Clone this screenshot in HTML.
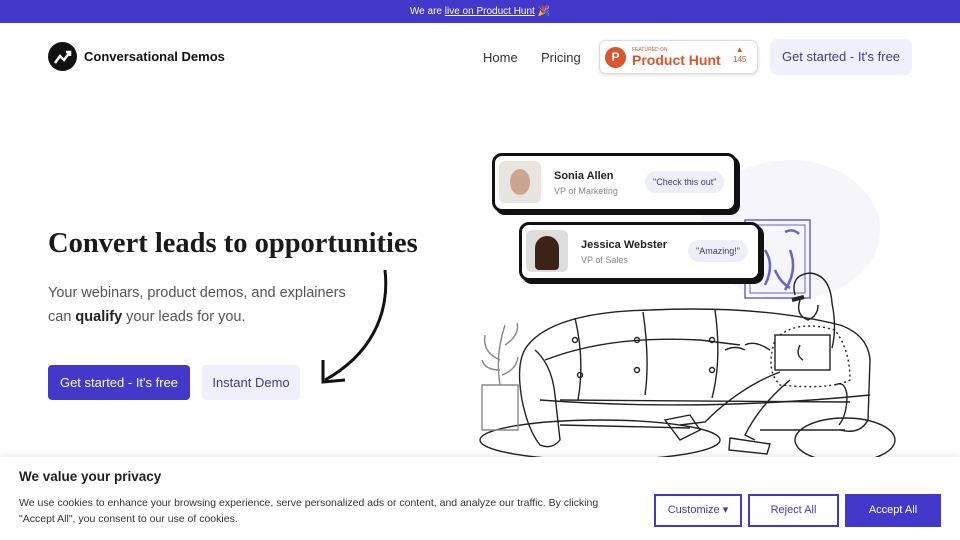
<!DOCTYPE html>
<html><head><meta charset="utf-8"><style>
*{box-sizing:border-box;margin:0;padding:0}
body{width:960px;height:540px;overflow:hidden;background:#fff;font-family:"Liberation Sans",sans-serif;position:relative;color:#111}
.banner{height:23px;background:#4338ca;color:#fff;font-size:10px;text-align:center;line-height:23px}
.abs{position:absolute}
.card{position:absolute;background:#fff;border:3px solid #111;border-radius:10px;box-shadow:3px 3px 0 #111}
.av{position:absolute;width:42px;height:42px;border-radius:6px;background:#e8e4e0;overflow:hidden}
.nm{position:absolute;font-size:11px;font-weight:bold;color:#222}
.rl{position:absolute;font-size:9px;color:#888}
.pill{position:absolute;background:#eeeef8;border-radius:12px;font-size:9px;color:#3f3f7a;padding:6px 8px}
.btn{position:absolute;font-size:12px;text-align:center}
</style></head><body>
<div class="banner">We are <u>live on Product Hunt</u> 🎉</div>
<div class="abs" style="left:48px;top:42px;width:29px;height:29px;border-radius:50%;background:#111"></div>
<svg class="abs" style="left:48px;top:42px" width="29" height="29"><path d="M7 21 L12 14 L16 18 L22 10 M18 10 H22 V14" stroke="#fff" stroke-width="2.5" fill="none"/></svg>
<div class="abs" style="left:84px;top:49px;font-size:13px;font-weight:bold">Conversational Demos</div>
<div class="abs" style="left:483px;top:50px;font-size:13px;color:#333">Home</div>
<div class="abs" style="left:541px;top:50px;font-size:13px;color:#333">Pricing</div>
<div class="abs" style="left:599px;top:40px;width:159px;height:34px;border:1px solid #ddd;border-radius:7px;box-shadow:0 1px 3px rgba(0,0,0,.15);background:#fff"></div>
<div class="abs" style="left:605px;top:47px;width:21px;height:21px;border-radius:50%;background:#da552f;color:#fff;font-weight:bold;font-size:12px;text-align:center;line-height:21px">P</div>
<div class="abs" style="left:632px;top:47px;font-size:5px;color:#da552f">FEATURED ON</div>
<div class="abs" style="left:632px;top:52px;font-size:14px;font-weight:bold;color:#da552f">Product Hunt</div>
<div class="abs" style="left:733px;top:45px;font-size:8px;color:#da552f;text-align:center;line-height:10px">▲<br>145</div>
<div class="abs" style="left:770px;top:39px;width:142px;height:36px;background:#f0f0fc;border-radius:7px;color:#3f3f8a;font-size:13px;text-align:center;line-height:36px">Get started - It's free</div>

<div class="abs" style="left:48px;top:228px;font-family:'Liberation Serif',serif;font-weight:bold;font-size:28.5px;color:#1a1a1a">Convert leads to opportunities</div>
<div class="abs" style="left:48px;top:281px;font-size:14.5px;color:#555;line-height:24px">Your webinars, product demos, and explainers<br>can <b style="color:#222">qualify</b> your leads for you.</div>
<div class="btn" style="left:48px;top:365px;width:142px;height:35px;background:#4338ca;color:#fff;border-radius:4px;line-height:35px;font-size:13px">Get started - It's free</div>
<div class="btn" style="left:202px;top:365px;width:98px;height:35px;background:#f0f0fc;color:#3f3f8a;border-radius:4px;line-height:35px;font-size:13px">Instant Demo</div>
<svg class="abs" style="left:315px;top:265px" width="80" height="125"><path d="M70 5 C75 50 55 90 10 115" stroke="#111" stroke-width="3" fill="none"/><path d="M8 95 L8 117 L30 115" stroke="#111" stroke-width="3" fill="none"/></svg>

<svg class="abs" style="left:0;top:0" width="960" height="540" fill="none" stroke="#222" stroke-width="1.4">
<ellipse cx="790" cy="230" rx="90" ry="70" fill="#f5f5fa" stroke="none"/>
<rect x="745" y="220" width="65" height="78" stroke="#6a62c8" stroke-width="1.5"/>
<rect x="750" y="225" width="55" height="68" stroke="#6a62c8" stroke-width="1"/>
<path d="M785 232 q8 -4 14 2 M765 250 q10 15 0 35 M790 250 q8 20 -5 40 M775 270 q5 12 15 18" stroke="#6a62c8" stroke-width="2.5"/>
<!-- rugs -->
<ellipse cx="600" cy="440" rx="120" ry="20"/>
<ellipse cx="845" cy="440" rx="50" ry="22"/>
<!-- plant -->
<path d="M482 385 h36 v45 h-36z M500 385 q-5 -30 5 -60 M500 360 q-18 -8 -15 -25 M505 345 q15 -10 12 -22 M500 370 q-15 0 -18 -10 M502 375 q14 -5 16 -18" stroke="#888"/>
<!-- sofa -->
<path d="M528 345 Q555 312 650 310 Q760 305 840 325 Q868 335 870 360 L868 420 Q860 435 840 430"/>
<path d="M528 345 Q515 360 522 400 Q528 430 540 445 Q552 450 560 440 L555 395 Q552 365 535 350"/>
<path d="M545 360 Q610 335 700 340 L740 345"/>
<path d="M575 318 Q585 360 578 400 M643 312 Q650 360 645 395 M715 310 Q722 360 712 398"/>
<path d="M560 400 L850 402 M560 425 L690 428 M760 430 L845 430"/>
<path d="M540 400 Q700 412 870 395"/>
<circle cx="575" cy="340" r="2.5"/><circle cx="637" cy="340" r="2.5"/><circle cx="712" cy="340" r="2.5"/>
<circle cx="580" cy="375" r="2.5"/><circle cx="637" cy="370" r="2.5"/><circle cx="712" cy="370" r="2.5"/>
<path d="M835 385 q10 -5 12 10 q0 20 -8 30"/>
<!-- woman -->
<path d="M795 295 q-5 -20 15 -22 q20 2 22 30 q5 25 0 45 M800 300 q-5 15 8 20 q10 -4 10 -15"/>
<path d="M792 300 l12 -3" stroke-width="4"/>
<path d="M780 335 q20 -15 55 -5 q15 20 15 50 q-20 10 -70 5 q-15 -15 -5 -45" stroke-dasharray="2 3"/>
<rect x="775" y="335" width="55" height="35" fill="#fff"/>
<path d="M800 345 q-5 10 3 15"/>
<path d="M745 345 q10 -5 25 5 M780 372 q-40 15 -75 50 L680 425 M790 380 q-30 25 -45 55 L755 440 M725 350 q10 -5 20 0"/>
<path d="M665 420 l15 20 l20 -10 l-10 -15z M730 438 l40 6 l-3 10 l-38 -4z"/>
</svg>

<div class="card" style="left:492px;top:153px;width:245px;height:59px">
<div class="av" style="left:4px;top:5px"><div style="margin:8px auto;width:20px;height:26px;border-radius:50%;background:#caa590"></div></div>
<div class="nm" style="left:59px;top:14px">Sonia Allen</div>
<div class="rl" style="left:59px;top:30px">VP of Marketing</div>
<div class="pill" style="left:150px;top:15px">"Check this out"</div>
</div>
<div class="card" style="left:519px;top:222px;width:242px;height:59px">
<div class="av" style="left:4px;top:5px;background:#ddd"><div style="margin:6px auto;width:24px;height:34px;border-radius:12px 12px 4px 4px;background:#3a2418"></div></div>
<div class="nm" style="left:59px;top:14px">Jessica Webster</div>
<div class="rl" style="left:59px;top:30px">VP of Sales</div>
<div class="pill" style="left:166px;top:15px">"Amazing!"</div>
</div>

<div class="abs" style="left:0;top:457px;width:960px;height:83px;background:#fff;box-shadow:0 -2px 6px rgba(0,0,0,.08)"></div>
<div class="abs" style="left:19px;top:469px;font-size:13.5px;font-weight:bold;color:#222">We value your privacy</div>
<div class="abs" style="left:19px;top:495px;font-size:10.5px;color:#333;line-height:16px;width:616px">We use cookies to enhance your browsing experience, serve personalized ads or content, and analyze our traffic. By clicking "Accept All", you consent to our use of cookies.</div>
<div class="btn" style="left:654px;top:494px;width:88px;height:33px;border:2px solid #4338ca;color:#4338ca;line-height:29px;font-size:11px">Customize ▾</div>
<div class="btn" style="left:748px;top:494px;width:91px;height:33px;border:2px solid #4338ca;color:#4338ca;line-height:29px;font-size:11px">Reject All</div>
<div class="btn" style="left:845px;top:494px;width:96px;height:33px;background:#4338ca;color:#fff;line-height:33px;font-size:11px">Accept All</div>
</body></html>
